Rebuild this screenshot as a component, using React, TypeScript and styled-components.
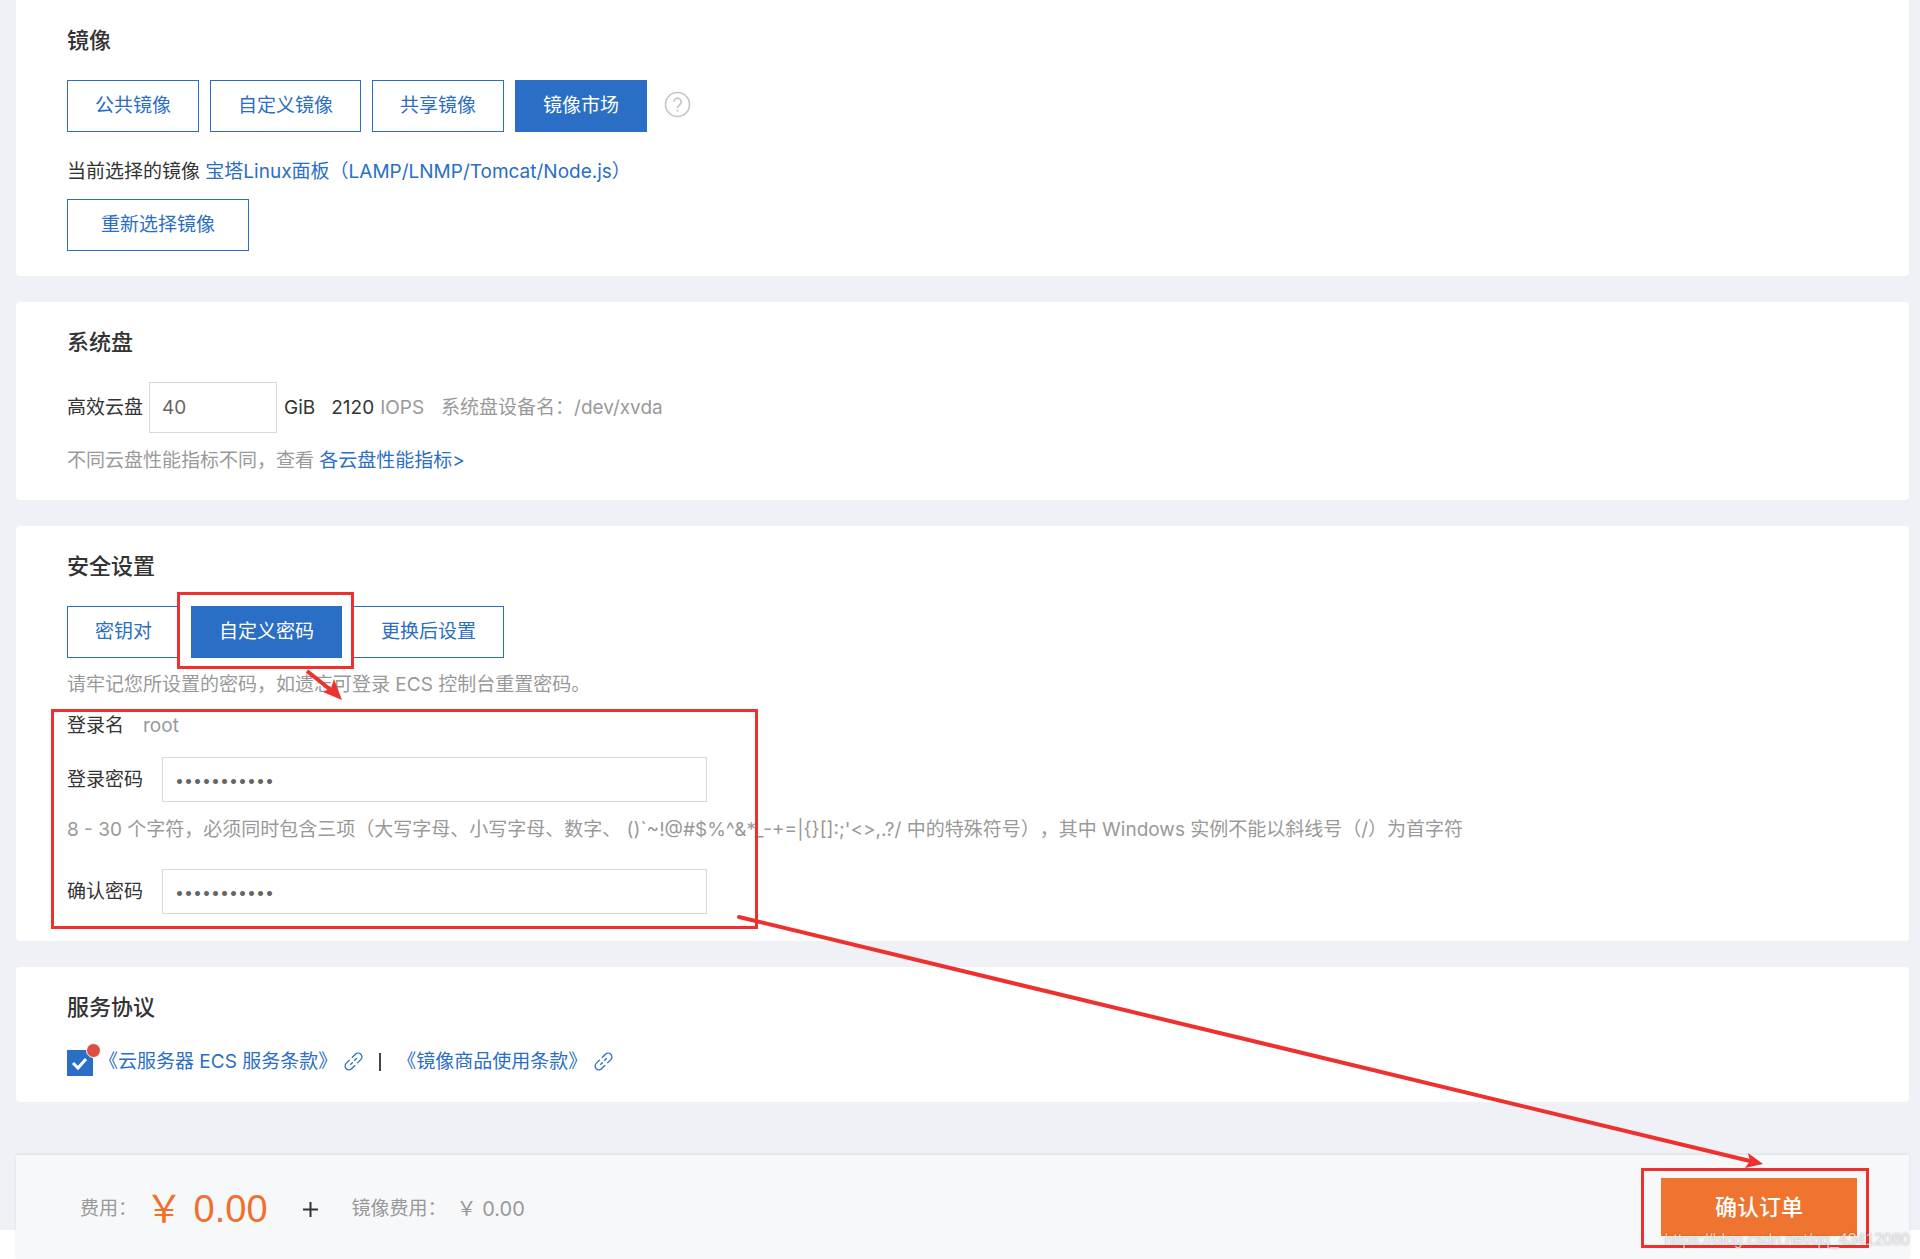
import React, { useState } from 'react';
import styled, { createGlobalStyle, css } from 'styled-components';

const blue = '#2a6ec6';
const red = '#ee302e';

const GlobalStyle = createGlobalStyle`
  *, *::before, *::after { box-sizing: border-box; }
  body {
    margin: 0;
    background: #fff;
    color: #333;
    font-family: Inter, "Noto Sans CJK SC", sans-serif;
    font-size: 19px;
    line-height: 28px;
    text-spacing-trim: space-all;
  }
  button, input { font: inherit; }
`;

const Page = styled.div`
  position: relative;
`;

const Main = styled.main`
  display: flex;
  flex-direction: column;
  gap: 26px;
  padding: 0 11px 128px 16px;
  background: #eff1f6;
`;

const Card = styled.section<{ $first?: boolean; $bottom: number }>`
  padding: 24px 51px ${(p) => p.$bottom}px;
  border-radius: ${(p) => (p.$first ? '0 0 4px 4px' : '4px')};
  background: #fff;
`;

const Title = styled.h2`
  margin: 0;
  font-size: 22px;
  line-height: 32px;
  font-weight: 500;
`;

const Options = styled.div`
  display: flex;
  align-items: center;
  gap: 11px;
  margin-top: 24px;
`;

const Button = styled.button<{ $active?: boolean; $wide?: boolean }>`
  height: 52px;
  padding: 0 ${(p) => (p.$wide ? 33 : 27)}px;
  border: 1px solid ${blue};
  background: #fff;
  color: ${blue};
  cursor: pointer;
  ${(p) =>
    p.$active &&
    css`
      background: ${blue};
      color: #fff;
    `}
`;

const HelpButton = styled.button`
  display: flex;
  margin: 0 0 4px 6px;
  padding: 0;
  border: 0;
  background: none;
`;

const Line = styled.p<{ $top: number; $muted?: boolean }>`
  margin: ${(p) => p.$top}px 0 0;
  color: ${(p) => (p.$muted ? '#999' : '#333')};
`;

const Link = styled.a`
  color: ${blue};
  text-decoration: none;
`;

const Reselect = styled.div`
  margin-top: 13px;
`;

const DiskRow = styled.div`
  display: flex;
  align-items: center;
  margin-top: 24px;
`;

const TextInput = styled.input`
  border: 1px solid #d9d9d9;
  border-radius: 0;
  background: #fff;
  color: #666;
  outline: none;
`;

const SizeInput = styled(TextInput)`
  width: 128px;
  height: 51px;
  margin: 0 7px 0 6px;
  padding: 0 12px;
`;

const Unit = styled.span`
  margin-right: 16px;
`;

const Muted = styled.span<{ $left: number }>`
  margin-left: ${(p) => p.$left}px;
  color: #999;
`;

const Credentials = styled.div`
  position: relative;
  margin-top: 13px;
`;

const Field = styled.div<{ $top: number }>`
  display: flex;
  align-items: center;
  gap: 19px;
  margin-top: ${(p) => p.$top}px;
`;

const PasswordInput = styled(TextInput)`
  width: 545px;
  height: 45px;
  padding: 0 12px;
  font-size: 16px;
`;

const Terms = styled.div`
  display: flex;
  align-items: flex-start;
  margin-top: 25px;
`;

const CheckBox = styled.span`
  position: relative;
  display: flex;
  height: 26px;
  margin: 2px 6px 0 0;
`;

const CheckInput = styled.input`
  appearance: none;
  width: 26px;
  height: 26px;
  margin: 0;
  border: 1px solid ${blue};
  background: #fff;
  &:checked { background: ${blue}; }
`;

const CheckMark = styled.svg`
  position: absolute;
  inset: 0;
  pointer-events: none;
`;

const Dot = styled.span`
  position: absolute;
  top: -7px;
  right: -8px;
  width: 15px;
  height: 15px;
  border: 1px solid #fff;
  border-radius: 50%;
  background: #dd4f43;
`;

const TermLink = styled(Link)`
  display: flex;
  align-items: center;
  gap: 7px;
`;

const Chain = styled.svg`
  margin-bottom: 2px;
`;

const Divider = styled.span`
  align-self: center;
  width: 2px;
  height: 18px;
  margin: 0 16px;
  background: #444;
`;

const OrderBar = styled.footer`
  position: sticky;
  bottom: 0;
  display: flex;
  align-items: center;
  justify-content: space-between;
  height: 104px;
  margin: -75px 11px 0 16px;
  padding: 0 52px 0 64px;
  background: #f7f8fa;
  box-shadow: 0 -1px 3px rgba(0, 0, 0, 0.08);
`;

const Fees = styled.div`
  display: flex;
  align-items: center;
  padding-top: 4px;
  color: #999;
`;

const Total = styled.strong`
  margin: 0 34px 0 8px;
  color: #f1702c;
  font-family: "Liberation Sans", "Noto Sans CJK SC", sans-serif;
  font-size: 38px;
  line-height: 48px;
  font-weight: 400;
`;

const Price = styled.span`
  margin-left: 10px;
  font-size: 20px;
`;

const Plus = styled.svg`
  margin-right: 33px;
`;

const SubmitButton = styled.button`
  width: 196px;
  height: 58px;
  padding: 0;
  border: 0;
  background: #ee742f;
  color: #fff;
  font-size: 22px;
  font-weight: 500;
  cursor: pointer;
`;

const Highlighted = styled.div`
  position: relative;
  z-index: 1;
`;

const Frame = styled.span<{ $inset: string }>`
  position: absolute;
  inset: ${(p) => p.$inset};
  border: 3px solid ${red};
  pointer-events: none;
`;

const LoginFrame = styled(Frame)`
  right: auto;
  width: 707px;
`;

const Arrows = styled.svg`
  position: absolute;
  top: 0;
  left: 0;
  z-index: 3;
  pointer-events: none;
`;

const Watermark = styled.span`
  position: absolute;
  right: 10px;
  bottom: 9px;
  z-index: 4;
  color: rgba(255, 255, 255, 0.7);
  font-family: "Liberation Sans", sans-serif;
  font-size: 16px;
  line-height: 20px;
  text-shadow: 0 0 2px rgba(0, 0, 0, 0.35);
  pointer-events: none;
`;

const ChainIcon = () => (
  <Chain width="19" height="19" viewBox="0 0 19 19" fill="none" stroke={blue} strokeWidth="1.3" aria-hidden="true">
    <g transform="rotate(-45 9.5 9.5)">
      <path d="M8 5.7H3a3.8 3.8 0 0 0 0 7.6H8" />
      <path d="M11 5.7h5a3.8 3.8 0 0 1 0 7.6H11" />
      <path d="M5 9.5h3.5M10.5 9.5H14" />
    </g>
  </Chain>
);

const imageTabs = ['公共镜像', '自定义镜像', '共享镜像', '镜像市场'];

export default function App() {
  const [imageTab, setImageTab] = useState('镜像市场');
  const [auth, setAuth] = useState('自定义密码');

  return (
    <Page>
      <GlobalStyle />
      <Main>
        <Card $first $bottom={25}>
          <Title>镜像</Title>
          <Options>
            {imageTabs.map((name) => (
              <Button key={name} type="button" $active={name === imageTab} onClick={() => setImageTab(name)}>
                {name}
              </Button>
            ))}
            <HelpButton type="button" aria-label="帮助">
              <svg width="27" height="27" viewBox="0 0 27 27" fill="none" stroke="#c4c4c4" strokeWidth="1.6">
                <circle cx="13.5" cy="13.5" r="12" />
                <path d="M9.8 10.8a3.7 3.7 0 1 1 5.6 3.2c-1.3.8-1.9 1.5-1.9 3" />
                <path d="M13.5 18.6v2" />
              </svg>
            </HelpButton>
          </Options>
          <Line $top={26}>
            当前选择的镜像 <Link href="#image">宝塔Linux面板（LAMP/LNMP/Tomcat/Node.js）</Link>
          </Line>
          <Reselect>
            <Button type="button" $wide>重新选择镜像</Button>
          </Reselect>
        </Card>

        <Card $bottom={25}>
          <Title>系统盘</Title>
          <DiskRow>
            <label htmlFor="disk">高效云盘</label>
            <SizeInput id="disk" type="text" defaultValue="40" />
            <Unit>GiB</Unit>
            <span>2120</span>
            <Muted $left={6}>IOPS</Muted>
            <Muted $left={17}>系统盘设备名：/dev/xvda</Muted>
          </DiskRow>
          <Line $top={14} $muted>
            不同云盘性能指标不同，查看 <Link href="#disks">各云盘性能指标&gt;</Link>
          </Line>
        </Card>

        <Card $bottom={27}>
          <Title>安全设置</Title>
          <Options>
            <Button type="button" $active={auth === '密钥对'} onClick={() => setAuth('密钥对')}>密钥对</Button>
            <Highlighted>
              <Button type="button" $active={auth === '自定义密码'} onClick={() => setAuth('自定义密码')}>
                自定义密码
              </Button>
              <Frame $inset="-14px -12px -11px -14px" />
            </Highlighted>
            <Button type="button" $active={auth === '更换后设置'} onClick={() => setAuth('更换后设置')}>
              更换后设置
            </Button>
          </Options>
          <Line $top={13} $muted>请牢记您所设置的密码，如遗忘可登录 ECS 控制台重置密码。</Line>
          <Credentials>
            <Field $top={0}>
              <span>登录名</span>
              <Muted $left={0}>root</Muted>
            </Field>
            <Field $top={17}>
              <label htmlFor="password">登录密码</label>
              <PasswordInput id="password" type="password" defaultValue="Ecs-admin30" />
            </Field>
            <Line $top={14} $muted>
              {"8 - 30 个字符，必须同时包含三项（大写字母、小写字母、数字、 ()`~!@#$%^&*_-+=|{}[]:;'<>,.?/ 中的特殊符号），其中 Windows 实例不能以斜线号（/）为首字符"}
            </Line>
            <Field $top={25}>
              <label htmlFor="confirm">确认密码</label>
              <PasswordInput id="confirm" type="password" defaultValue="Ecs-admin30" />
            </Field>
            <LoginFrame $inset="-3px auto -15px -16px" />
          </Credentials>
        </Card>

        <Card $bottom={26}>
          <Title>服务协议</Title>
          <Terms>
            <CheckBox>
              <CheckInput type="checkbox" defaultChecked aria-label="同意服务条款" />
              <CheckMark viewBox="0 0 26 26" fill="none" stroke="#fff" strokeWidth="3">
                <path d="M6 13l5 5 8-9" />
              </CheckMark>
              <Dot />
            </CheckBox>
            <TermLink href="#ecs-terms">《云服务器 ECS 服务条款》<ChainIcon /></TermLink>
            <Divider />
            <TermLink href="#image-terms">《镜像商品使用条款》<ChainIcon /></TermLink>
          </Terms>
        </Card>
      </Main>

      <OrderBar>
        <Fees>
          <span>费用：</span>
          <Total>￥ 0.00</Total>
          <Plus width="17" height="17" viewBox="0 0 17 17" stroke="#333" strokeWidth="2" aria-hidden="true">
            <path d="M8.5 1v15M1 8.5h15" />
          </Plus>
          <span>镜像费用：</span>
          <Price>￥ 0.00</Price>
        </Fees>
        <Highlighted>
          <SubmitButton type="button">确认订单</SubmitButton>
          <Frame $inset="-10px -12px -12px -20px" />
        </Highlighted>
      </OrderBar>

      <Arrows width="1920" height="1259" viewBox="0 0 1920 1259" fill={red} stroke={red} aria-hidden="true">
        <path d="M307 671L332 691" strokeWidth="4" />
        <path d="M342 700L334 679L331 688L323 692z" stroke="none" />
        <path d="M739 917L1750 1161" strokeWidth="4" strokeLinecap="round" />
        <path d="M1763 1164L1748 1153L1750 1161L1745 1168z" stroke="none" />
      </Arrows>
      <Watermark>https://blog.csdn.net/qq_43412080</Watermark>
    </Page>
  );
}
